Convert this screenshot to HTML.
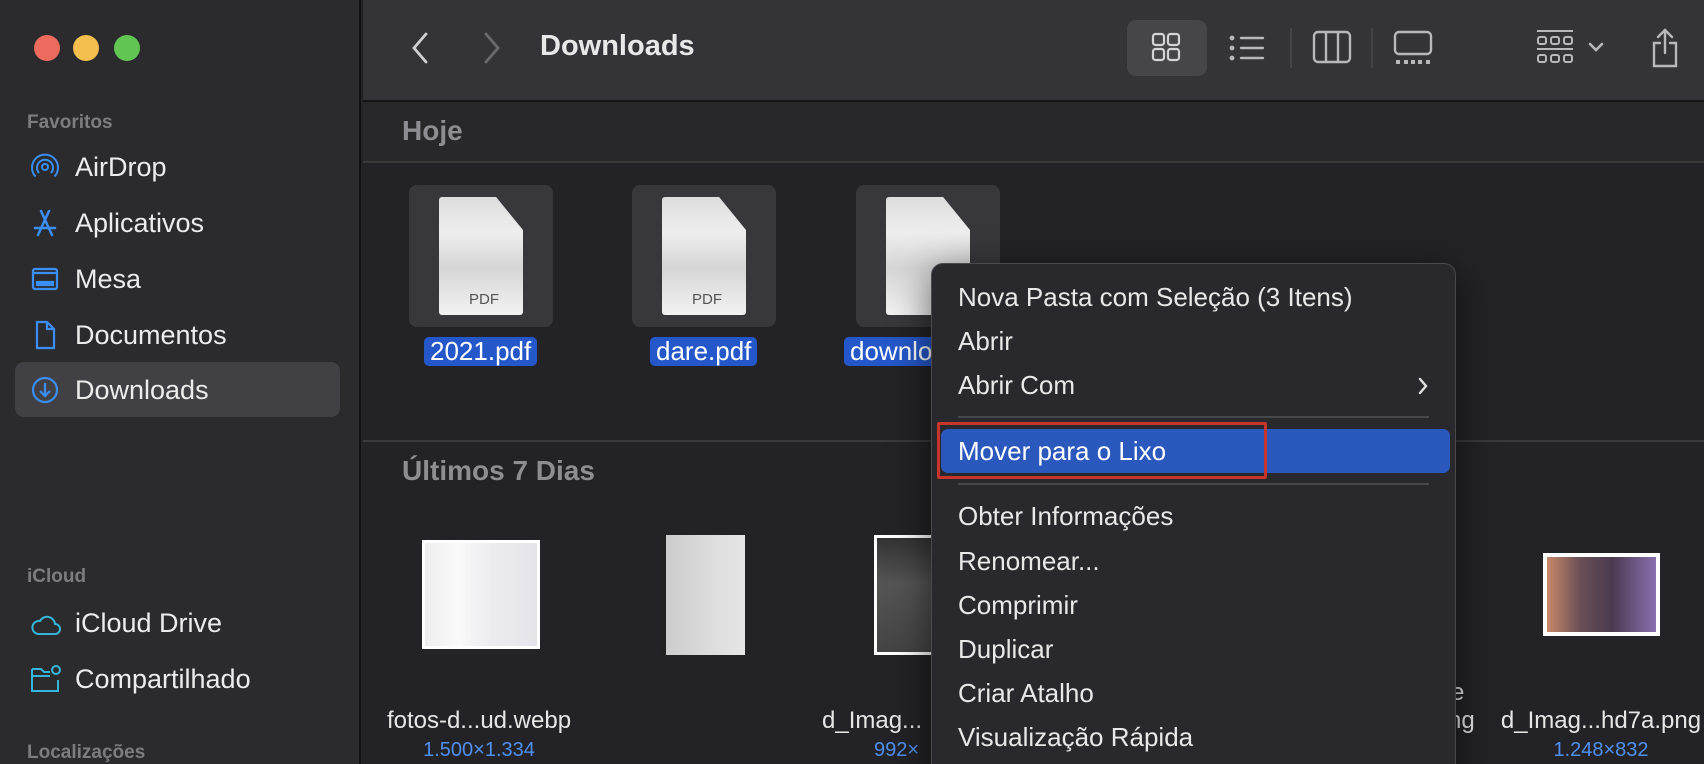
<!DOCTYPE html>
<html><head><meta charset="utf-8"><style>
*{margin:0;padding:0;box-sizing:border-box}
html{width:1704px;height:764px;overflow:hidden}
body{width:1704px;height:764px;overflow:hidden;background:#232327;font-family:"Liberation Sans",sans-serif;position:relative;color:#e6e6e6}
.abs{position:absolute}
#side{left:0;top:0;width:361px;height:764px;background:#2b2b2e;border-right:2px solid #111}
.dot{position:absolute;top:35px;width:26px;height:26px;border-radius:50%}
.sh{position:absolute;left:27px;font-size:19px;font-weight:bold;color:#7d7d80}
.si{position:absolute;left:75px;font-size:27px;color:#ececec;line-height:30px}
.ic{position:absolute;left:30px}
#tb{left:363px;top:0;width:1341px;height:102px;background:#343438;border-bottom:2px solid #151517}
#hd1{left:363px;top:102px;width:1341px;height:61px;background:#28282b;border-bottom:2px solid #3a3a3d}
.sec{position:absolute;left:402px;font-size:28px;font-weight:bold;color:#8e8e92}
.tile{position:absolute;top:185px;width:144px;height:142px;background:#38383c;border-radius:8px}
.doc{position:absolute;top:12px;left:30px;width:84px;height:118px;background:linear-gradient(#ddd,#eee 30%,#d6d6d6 60%,#f2f2f2);border-radius:3px;clip-path:polygon(0 0,68% 0,100% 28%,100% 100%,0 100%)}
.lbl{position:absolute;top:337px;height:29px;background:#2457c9;color:#fff;font-size:26px;line-height:29px;padding:0 6px;border-radius:5px}
.nm{position:absolute;font-size:24px;color:#e6e6e6;text-align:center;white-space:nowrap}
.dm{position:absolute;font-size:20px;color:#4e8ff0;text-align:center}
#menu{left:931px;top:263px;width:525px;height:520px;background:#29292d;border:1px solid #4a4a4e;border-radius:12px;box-shadow:0 10px 40px rgba(0,0,0,.6)}
.mi{position:absolute;left:26px;font-size:26px;color:#e8e8e8;line-height:30px}
.sep{position:absolute;left:26px;right:26px;height:2px;background:#48484c}
</style></head><body>
<div id="side" class="abs">
<div class="dot" style="left:34px;background:#ec6a5e"></div>
<div class="dot" style="left:73px;background:#f4bf4f"></div>
<div class="dot" style="left:114px;background:#61c554"></div>
<div class="sh" style="top:112px">Favoritos</div>
<div class="abs" style="left:15px;top:362px;width:325px;height:55px;background:#414145;border-radius:9px"></div>
<svg class="ic" style="top:152px" width="30" height="30" viewBox="0 0 30 30" fill="none" stroke="#3a8ef6" stroke-width="2"><circle cx="15" cy="15" r="3"/><path d="M9 21a8 8 0 1 1 12 0"/><path d="M5.5 24.5a13 13 0 1 1 19 0"/></svg>
<div class="si" style="top:152px">AirDrop</div>
<svg class="ic" style="top:208px" width="30" height="30" viewBox="0 0 30 30" fill="none" stroke="#3a8ef6" stroke-width="2.5" stroke-linecap="round"><path d="M11 3l11 24M19 3L8 27M5 20h20"/></svg>
<div class="si" style="top:208px">Aplicativos</div>
<svg class="ic" style="top:264px" width="30" height="30" viewBox="0 0 30 30" fill="none" stroke="#3a8ef6" stroke-width="2.2"><rect x="3" y="5" width="24" height="20" rx="2"/><path d="M3 9h24"/><rect x="7" y="18" width="16" height="3" fill="#3a8ef6"/></svg>
<div class="si" style="top:264px">Mesa</div>
<svg class="ic" style="top:320px" width="30" height="30" viewBox="0 0 30 30" fill="none" stroke="#3a8ef6" stroke-width="2.2"><path d="M7 2h10l7 7v19H7z"/><path d="M17 2v7h7"/></svg>
<div class="si" style="top:320px">Documentos</div>
<svg class="ic" style="top:375px" width="30" height="30" viewBox="0 0 30 30" fill="none" stroke="#3a8ef6" stroke-width="2.2"><circle cx="15" cy="15" r="12"/><path d="M15 8v13M10 16l5 5 5-5"/></svg>
<div class="si" style="top:375px">Downloads</div>
<div class="sh" style="top:566px">iCloud</div>
<svg class="ic" style="top:610px" width="32" height="28" viewBox="0 0 32 28" fill="none" stroke="#35b6d8" stroke-width="2"><path d="M8 24h17a5 5 0 0 0 0-10a8 8 0 0 0-15-3a6 6 0 0 0-2 13z"/></svg>
<div class="si" style="top:608px">iCloud Drive</div>
<svg class="ic" style="top:664px" width="32" height="30" viewBox="0 0 32 30" fill="none" stroke="#35b6d8" stroke-width="2"><path d="M2 5h9l3 3h6M2 5v22h26V16M2 12h18"/><circle cx="26" cy="6" r="4"/></svg>
<div class="si" style="top:664px">Compartilhado</div>
<div class="sh" style="top:742px">Localizações</div>
</div>
<div id="tb" class="abs">
<svg class="abs" style="left:47px;top:31px" width="20" height="34" viewBox="0 0 20 34" fill="none" stroke="#cfcfd2" stroke-width="2.8" stroke-linecap="round"><path d="M16 3L4 17l12 14"/></svg>
<svg class="abs" style="left:119px;top:31px" width="20" height="34" viewBox="0 0 20 34" fill="none" stroke="#6b6b6f" stroke-width="2.8" stroke-linecap="round"><path d="M4 3l12 14L4 31"/></svg>
<div class="abs" style="left:177px;top:30px;font-size:29px;font-weight:bold;color:#e8e8e8">Downloads</div>
<div class="abs" style="left:764px;top:20px;width:80px;height:56px;background:#46464a;border-radius:9px"></div>
<svg class="abs" style="left:787px;top:31px" width="32" height="32" viewBox="0 0 32 32" fill="none" stroke="#d4d4d6" stroke-width="2.2"><rect x="3" y="3" width="11" height="11" rx="2.5"/><rect x="18" y="3" width="11" height="11" rx="2.5"/><rect x="3" y="18" width="11" height="11" rx="2.5"/><rect x="18" y="18" width="11" height="11" rx="2.5"/></svg>
<svg class="abs" style="left:866px;top:33px" width="36" height="30" viewBox="0 0 36 30" fill="none" stroke="#b8b8bb" stroke-width="2.4" stroke-linecap="round"><path d="M12 5h22M12 15h22M12 25h22"/><circle cx="3" cy="5" r="1.2"/><circle cx="3" cy="15" r="1.2"/><circle cx="3" cy="25" r="1.2"/></svg>
<div class="abs" style="left:927px;top:28px;width:2px;height:40px;background:#444448"></div>
<svg class="abs" style="left:949px;top:30px" width="40" height="34" viewBox="0 0 40 34" fill="none" stroke="#b8b8bb" stroke-width="2.4"><rect x="2" y="2" width="36" height="30" rx="4"/><path d="M14 2v30M26 2v30"/></svg>
<div class="abs" style="left:1008px;top:28px;width:2px;height:40px;background:#444448"></div>
<svg class="abs" style="left:1030px;top:30px" width="40" height="36" viewBox="0 0 40 36" fill="none" stroke="#b8b8bb" stroke-width="2.4"><rect x="2" y="2" width="36" height="22" rx="4"/><path d="M3 32h4M11 32h4M18 32h4M25 32h4M33 32h4" stroke-width="4"/></svg>
<svg class="abs" style="left:1173px;top:29px" width="38" height="38" viewBox="0 0 38 38" fill="none" stroke="#b8b8bb" stroke-width="2"><path d="M1 2h36M1 20h36"/><rect x="2" y="8" width="8" height="7" rx="2"/><rect x="15" y="8" width="8" height="7" rx="2"/><rect x="28" y="8" width="8" height="7" rx="2"/><rect x="2" y="26" width="8" height="7" rx="2"/><rect x="15" y="26" width="8" height="7" rx="2"/><rect x="28" y="26" width="8" height="7" rx="2"/></svg>
<svg class="abs" style="left:1224px;top:41px" width="18" height="12" viewBox="0 0 18 12" fill="none" stroke="#b8b8bb" stroke-width="2.6" stroke-linecap="round"><path d="M3 3l6 6 6-6"/></svg>
<svg class="abs" style="left:1287px;top:28px" width="30" height="40" viewBox="0 0 30 40" fill="none" stroke="#b8b8bb" stroke-width="2.4" stroke-linecap="round"><path d="M15 25V3M8 9l7-7 7 7M10 15H4v23h22V15h-6"/></svg>
</div>
<div id="hd1" class="abs"></div>
<div class="sec" style="top:115px">Hoje</div>
<div class="tile" style="left:409px"><div class="doc"><div style="position:absolute;top:94px;left:30px;font-size:15px;color:#555">PDF</div></div></div>
<div class="tile" style="left:632px"><div class="doc"><div style="position:absolute;top:94px;left:30px;font-size:15px;color:#555">PDF</div></div></div>
<div class="tile" style="left:856px"><div class="doc"></div></div>
<div class="lbl" style="left:424px">2021.pdf</div>
<div class="lbl" style="left:650px">dare.pdf</div>
<div class="lbl" style="left:844px;width:100px">download</div>
<div class="abs" style="left:363px;top:440px;width:1341px;height:2px;background:#3a3a3d"></div>
<div class="sec" style="top:455px">Últimos 7 Dias</div>
<div class="abs" style="left:422px;top:540px;width:118px;height:109px;background:linear-gradient(90deg,#eee,#fafafa 30%,#ececf0 60%,#e4e4ea);border:3px solid #fff"></div>
<div class="abs" style="left:661px;top:535px;width:84px;height:120px;background:linear-gradient(90deg,#222 0 5px,#ccc 5px,#ddd 60%,#e6e6e6)"></div>
<div class="abs" style="left:874px;top:535px;width:60px;height:120px;background:linear-gradient(#333,#555 40%,#444);border:3px solid #fff;border-right:none"></div>
<div class="abs" style="left:1543px;top:553px;width:117px;height:83px;background:linear-gradient(90deg,#c98a6a,#6a4f55 30%,#4a3a50 60%,#8a70b0);border:4px solid #fff"></div>
<div class="nm" style="left:379px;top:707px;width:200px">fotos-d...ud.webp</div>
<div class="dm" style="left:379px;top:739px;width:200px">1.500×1.334</div>
<div class="nm" style="left:822px;top:707px">d_Imag...</div>
<div class="dm" style="left:874px;top:739px">992×</div>
<div class="nm" style="left:1451px;top:679px">e</div>
<div class="nm" style="left:1448px;top:707px">ng</div>
<div class="nm" style="left:1490px;top:707px;width:222px">d_Imag...hd7a.png</div>
<div class="dm" style="left:1501px;top:739px;width:200px">1.248×832</div>
<div id="menu" class="abs">
<div class="mi" style="top:18px">Nova Pasta com Seleção (3 Itens)</div>
<div class="mi" style="top:62px">Abrir</div>
<div class="mi" style="top:106px">Abrir Com</div>
<svg class="abs" style="left:485px;top:112px" width="12" height="20" viewBox="0 0 12 20" fill="none" stroke="#e0e0e0" stroke-width="2.4" stroke-linecap="round"><path d="M3 3l6 7-6 7"/></svg>
<div class="sep" style="top:152px"></div>
<div class="abs" style="left:9px;top:165px;width:509px;height:44px;background:#2b58bd;border-radius:7px"></div>
<div class="mi" style="top:172px;color:#fff">Mover para o Lixo</div>
<div class="abs" style="left:5px;top:158px;width:330px;height:57px;border:3px solid #c8342a;border-radius:2px"></div>
<div class="sep" style="top:219px"></div>
<div class="mi" style="top:237px">Obter Informações</div>
<div class="mi" style="top:282px">Renomear...</div>
<div class="mi" style="top:326px">Comprimir</div>
<div class="mi" style="top:370px">Duplicar</div>
<div class="mi" style="top:414px">Criar Atalho</div>
<div class="mi" style="top:458px">Visualização Rápida</div>
</div>
</body></html>
